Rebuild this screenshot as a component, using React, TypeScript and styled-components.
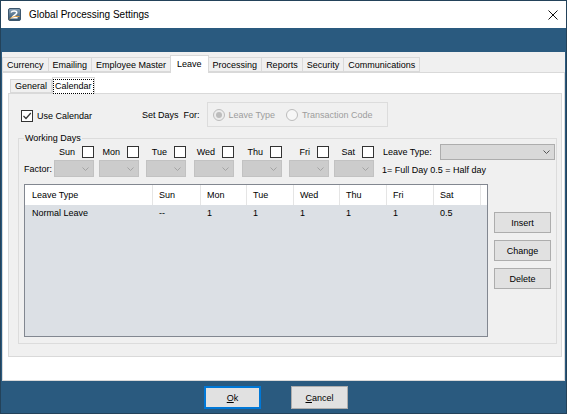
import React from "react";
import styled, { createGlobalStyle } from "styled-components";

const GlobalStyle = createGlobalStyle`
  html, body {
    margin: 0;
    padding: 0;
    background: #ffffff;
  }
  body {
    font-family: "Liberation Sans", Arial, sans-serif;
    font-size: 9px;
    color: #000000;
  }
  * {
    box-sizing: border-box;
  }
`;

const Window = styled.div`
  width: 567px;
  height: 414px;
  background: #2a5a7f;
  border: 1px solid #23425a;
  display: flex;
  flex-direction: column;
  overflow: hidden;
`;

const TitleBar = styled.div`
  height: 27px;
  flex-shrink: 0;
  background: #ffffff;
  display: flex;
  align-items: center;
  padding: 0 8px 0 7px;
`;

const TitleText = styled.span`
  font-size: 10px;
  margin-left: 8px;
  flex: 1;
`;

const Band = styled.div`
  height: 24px;
  flex-shrink: 0;
`;

const Main = styled.div`
  flex: 1;
  margin: 0 1px;
  display: flex;
  flex-direction: column;
  min-height: 0;
`;

const TabStrip = styled.div`
  height: 20px;
  flex-shrink: 0;
  background: #f0f0f0;
  display: flex;
  align-items: flex-end;
  padding-left: 1px;
`;

const Tab = styled.div<{ $active?: boolean }>`
  height: ${(p) => (p.$active ? "18px" : "15px")};
  padding: ${(p) => (p.$active ? "0 6px 2px" : "0 4px")};
  margin-left: -1px;
  margin-bottom: ${(p) => (p.$active ? "-1px" : "0")};
  background: ${(p) => (p.$active ? "#ffffff" : "#f0f0f0")};
  border: 1px solid #d9d9d9;
  border-bottom: ${(p) => (p.$active ? "none" : "1px solid #d9d9d9")};
  display: flex;
  align-items: center;
  white-space: nowrap;
  position: relative;
  z-index: ${(p) => (p.$active ? 1 : 0)};
`;

const OuterPage = styled.div`
  flex: 1;
  background: #ffffff;
  border: 1px solid #d9d9d9;
  padding: 4px 2px 23px 5px;
  display: flex;
  flex-direction: column;
  min-height: 0;
`;

const InnerTabStrip = styled.div`
  height: 16px;
  flex-shrink: 0;
  display: flex;
  align-items: flex-end;
  padding-left: 2px;
`;

const InnerTab = styled.div<{ $active?: boolean }>`
  height: ${(p) => (p.$active ? "17px" : "14px")};
  padding: 0 ${(p) => (p.$active ? "1px" : "4px")};
  margin-bottom: ${(p) => (p.$active ? "-1px" : "0")};
  background: ${(p) => (p.$active ? "#ffffff" : "#f0f0f0")};
  border: 1px solid #d9d9d9;
  border-bottom: ${(p) => (p.$active ? "none" : "1px solid #d9d9d9")};
  display: flex;
  align-items: center;
  position: relative;
  z-index: ${(p) => (p.$active ? 1 : 0)};
`;

const FocusText = styled.span`
  outline: 1px dotted #000000;
  padding: 1px 1px 2px;
  line-height: 10px;
`;

const InnerPage = styled.div`
  flex: 1;
  background: #f0f0f0;
  border: 1px solid #d9d9d9;
  padding: 8px 4px 12px 9px;
  display: flex;
  flex-direction: column;
  min-height: 0;
`;

const TopRow = styled.div`
  height: 25px;
  display: flex;
  align-items: center;
`;

const CheckBox = styled.span<{ $checked?: boolean }>`
  width: 12px;
  height: 12px;
  flex-shrink: 0;
  border: 1px solid #333333;
  background: #ffffff;
  display: inline-flex;
  align-items: center;
  justify-content: center;
`;

const UseCalendar = styled.label`
  display: flex;
  align-items: center;
  gap: 4px;
  margin-left: 3px;
  margin-top: 3px;
`;

const SetDaysLabel = styled.span`
  margin-left: 50px;
  white-space: pre;
`;

const RadioBox = styled.div`
  width: 181px;
  height: 25px;
  margin-left: 7px;
  border: 1px solid #dcdcdc;
  display: flex;
  align-items: center;
  padding-left: 5px;
  color: #9d9d9d;
`;

const RadioOption = styled.span`
  display: flex;
  align-items: center;
  gap: 4px;
  margin-right: 11px;
`;

const RadioCircle = styled.span<{ $selected?: boolean }>`
  width: 12px;
  height: 12px;
  border-radius: 50%;
  border: 1px solid #bcbcbc;
  background: ${(p) => (p.$selected ? "#ececec" : "#f7f7f7")};
  display: inline-flex;
  align-items: center;
  justify-content: center;
  &::after {
    content: "";
    width: 6px;
    height: 6px;
    border-radius: 50%;
    background: ${(p) => (p.$selected ? "#bcbcbc" : "transparent")};
  }
`;

const GroupBox = styled.fieldset`
  margin: 6px 0 0 0;
  padding: 0 1px 6px 5px;
  border: 1px solid #dcdcdc;
  min-width: 0;
  flex: 1;
  display: flex;
  flex-direction: column;
`;

const GroupLegend = styled.legend`
  padding: 0 1px;
  margin-left: 0;
  line-height: 10px;
  font-size: 9px;
`;

const ControlsGrid = styled.div`
  display: grid;
  grid-template-columns: 30px 45px 47px 48px 48px 47px 45px 40px 9px 57px 115px;
  grid-template-rows: 17px 17px;
  align-items: center;
`;

const DayCell = styled.div`
  width: 40px;
  display: flex;
  justify-content: flex-end;
  align-items: center;
  gap: 7px;
  margin-top: 1px;
`;

const Combo = styled.div<{ $enabled?: boolean }>`
  width: ${(p) => (p.$enabled ? "115px" : "40px")};
  height: ${(p) => (p.$enabled ? "16px" : "17px")};
  background: ${(p) => (p.$enabled ? "#d9d9d9" : "#cccccc")};
  border: 1px solid ${(p) => (p.$enabled ? "#adadad" : "#c2c2c2")};
  display: flex;
  align-items: center;
  justify-content: flex-end;
  padding-right: 4px;
  color: ${(p) => (p.$enabled ? "#555555" : "#a3a3a3")};
`;

const Note = styled.span`
  grid-column: 9 / span 3;
  padding-left: 8px;
  margin-top: 3px;
`;

const ListRow = styled.div`
  margin-top: 7px;
  display: flex;
  gap: 6px;
`;

const ListView = styled.div`
  width: 464px;
  height: 153px;
  border: 1px solid #828790;
  background: #dce0e5;
  display: flex;
  flex-direction: column;
`;

const columns = "128px 48px 46px 47px 46px 47px 47px 47px 1fr";

const HeaderRow = styled.div`
  height: 20px;
  background: #ffffff;
  display: grid;
  grid-template-columns: ${columns};
`;

const HeaderCell = styled.div`
  border-right: 1px solid #e5e5e5;
  padding-left: 6px;
  display: flex;
  align-items: center;
  &:first-child {
    padding-left: 7px;
  }
  &:last-child {
    border-right: none;
  }
`;

const DataRow = styled.div`
  height: 16px;
  display: grid;
  grid-template-columns: ${columns};
`;

const DataCell = styled.div`
  padding-left: 6px;
  display: flex;
  align-items: center;
  &:first-child {
    padding-left: 7px;
  }
`;

const SideButtons = styled.div`
  margin-top: 28px;
  display: flex;
  flex-direction: column;
  gap: 7px;
`;

const Button = styled.button<{ $focused?: boolean }>`
  width: 57px;
  height: 21px;
  background: #e1e1e1;
  border: 1px solid #adadad;
  font-family: "Liberation Sans", Arial, sans-serif;
  font-size: 9px;
  color: #000000;
  padding: 0;
`;

const BottomBar = styled.div`
  height: 32px;
  flex-shrink: 0;
  display: flex;
  align-items: flex-start;
  gap: 30px;
  padding: 5px 0 0 203px;
`;

const DialogButton = styled.button<{ $focused?: boolean }>`
  width: 57px;
  height: 23px;
  background: #e1e1e1;
  border: ${(p) => (p.$focused ? "2px solid #0078d7" : "1px solid #adadad")};
  font-family: "Liberation Sans", Arial, sans-serif;
  font-size: 9px;
  color: #000000;
  padding: 0;
  u {
    text-decoration: underline;
  }
`;

function AppIcon() {
  return (
    <svg width="13" height="13" viewBox="0 0 13 13">
      <defs>
        <linearGradient id="ig" x1="0" y1="0" x2="0" y2="1">
          <stop offset="0" stopColor="#8aa3b8" />
          <stop offset="1" stopColor="#2f4f6b" />
        </linearGradient>
      </defs>
      <rect x="0.5" y="0.5" width="12" height="12" rx="1.5" fill="url(#ig)" stroke="#3b566d" />
      <path d="M3 4.5 C4 2.5 8.5 2.5 8.8 4.6 C9 6.2 6 7 4 9.8 L9.6 9.8" fill="none" stroke="#ffffff" strokeWidth="1.5" />
      <path d="M1.5 11 C4 8.5 8 8 11.5 8.6" fill="none" stroke="#f2a43a" strokeWidth="0.9" />
    </svg>
  );
}

function CloseIcon() {
  return (
    <svg width="10" height="10" viewBox="0 0 10 10">
      <path d="M0.5 0.5 L9.5 9.5 M9.5 0.5 L0.5 9.5" stroke="#111111" strokeWidth="1" />
    </svg>
  );
}

function Check() {
  return (
    <svg width="10" height="10" viewBox="0 0 10 10">
      <path d="M1.5 5 L4 7.5 L8.8 2" fill="none" stroke="#333333" strokeWidth="1.2" />
    </svg>
  );
}

function Chevron() {
  return (
    <svg width="7" height="4" viewBox="0 0 7 4">
      <path d="M0.5 0.5 L3.5 3.5 L6.5 0.5" fill="none" stroke="currentColor" strokeWidth="1" />
    </svg>
  );
}

const tabs = [
  "Currency",
  "Emailing",
  "Employee Master",
  "Leave",
  "Processing",
  "Reports",
  "Security",
  "Communications",
];

const days = ["Sun", "Mon", "Tue", "Wed", "Thu", "Fri", "Sat"];
const headers = ["Leave Type", "Sun", "Mon", "Tue", "Wed", "Thu", "Fri", "Sat", ""];
const row = ["Normal Leave", "--", "1", "1", "1", "1", "1", "0.5"];

export default function App() {
  return (
    <>
      <GlobalStyle />
      <Window>
        <TitleBar>
          <AppIcon />
          <TitleText>Global Processing Settings</TitleText>
          <CloseIcon />
        </TitleBar>
        <Band />
        <Main>
          <TabStrip>
            {tabs.map((t) => (
              <Tab key={t} $active={t === "Leave"}>
                {t}
              </Tab>
            ))}
          </TabStrip>
          <OuterPage>
            <InnerTabStrip>
              <InnerTab>General</InnerTab>
              <InnerTab $active>
                <FocusText>Calendar</FocusText>
              </InnerTab>
            </InnerTabStrip>
            <InnerPage>
              <TopRow>
                <UseCalendar>
                  <CheckBox $checked>
                    <Check />
                  </CheckBox>
                  Use Calendar
                </UseCalendar>
                <SetDaysLabel>Set Days  For:</SetDaysLabel>
                <RadioBox>
                  <RadioOption>
                    <RadioCircle $selected />
                    Leave Type
                  </RadioOption>
                  <RadioOption>
                    <RadioCircle />
                    Transaction Code
                  </RadioOption>
                </RadioBox>
              </TopRow>
              <GroupBox>
                <GroupLegend>Working Days</GroupLegend>
                <ControlsGrid>
                  <span />
                  {days.map((d) => (
                    <DayCell key={d}>
                      {d}
                      <CheckBox />
                    </DayCell>
                  ))}
                  <span />
                  <span>Leave Type:</span>
                  <Combo $enabled>
                    <Chevron />
                  </Combo>
                  <span>Factor:</span>
                  {days.map((d) => (
                    <Combo key={d}>
                      <Chevron />
                    </Combo>
                  ))}
                  <Note>1= Full Day 0.5 = Half day</Note>
                </ControlsGrid>
                <ListRow>
                  <ListView>
                    <HeaderRow>
                      {headers.map((h, i) => (
                        <HeaderCell key={i}>{h}</HeaderCell>
                      ))}
                    </HeaderRow>
                    <DataRow>
                      {row.map((c, i) => (
                        <DataCell key={i}>{c}</DataCell>
                      ))}
                    </DataRow>
                  </ListView>
                  <SideButtons>
                    <Button>Insert</Button>
                    <Button>Change</Button>
                    <Button>Delete</Button>
                  </SideButtons>
                </ListRow>
              </GroupBox>
            </InnerPage>
          </OuterPage>
        </Main>
        <BottomBar>
          <DialogButton $focused>
            <u>O</u>k
          </DialogButton>
          <DialogButton>
            <u>C</u>ancel
          </DialogButton>
        </BottomBar>
      </Window>
    </>
  );
}
